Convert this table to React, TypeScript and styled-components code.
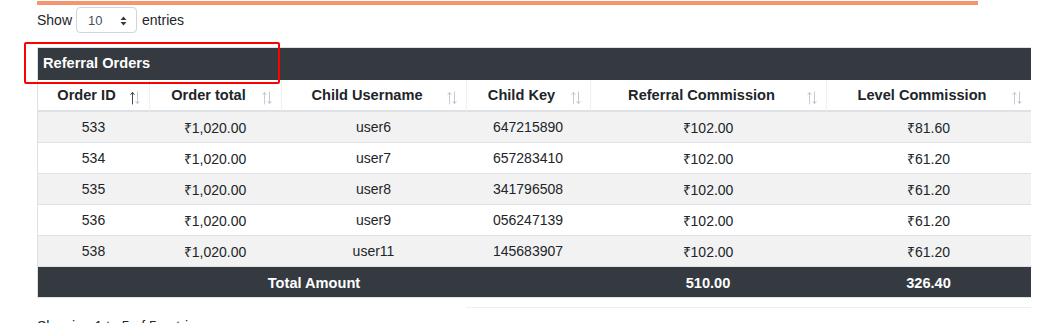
import React from "react";
import styled, { createGlobalStyle } from "styled-components";

const GlobalStyle = createGlobalStyle`
  html, body { margin: 0; padding: 0; background: #fff; }
  body {
    font-family: "Liberation Sans", Arial, sans-serif;
    font-size: 14px;
    color: #212529;
  }
`;

const Page = styled.div`
  position: relative;
  padding: 1px 0 0 37px;
`;

const TopBar = styled.div`
  width: 941px;
  height: 4px;
  background: #f4956f;
`;

const ShowRow = styled.div`
  display: flex;
  align-items: center;
  margin-top: 2px;
  height: 26px;
  font-size: 14px;
  line-height: 16px;
`;

const SelectBox = styled.div`
  box-sizing: border-box;
  width: 61px;
  height: 26px;
  margin: 0 5px 0 4px;
  border: 1px solid #ced4da;
  border-radius: 4px;
  display: flex;
  align-items: center;
  justify-content: space-between;
  padding: 2px 9px 0 11px;
  font-size: 13px;
  color: #495057;
`;

const TableWrap = styled.div`
  margin-top: 14px;
  width: 994px;
  box-sizing: border-box;
  border-left: 1px solid #dee2e6;
  border-top: 1px solid #dee2e6;
  overflow: hidden;
`;

const Table = styled.table`
  width: 993px;
  table-layout: fixed;
  border-collapse: separate;
  border-spacing: 0;
  font-size: 14px;
`;

const CaptionCell = styled.th`
  background: #343a40;
  color: #fff;
  font-weight: bold;
  font-size: 14.6px;
  text-align: left;
  height: 32px;
  padding: 0 0 2px 5px;
  box-sizing: border-box;
`;

const HeadCell = styled.th`
  background: #fff;
  height: 32px;
  box-sizing: border-box;
  padding: 0 9px 0 17px;
  border-bottom: 2px solid #dee2e6;
  border-left: 1px solid #f1f1f1;
  &:first-child { border-left: none; }
  font-weight: bold;
  font-size: 14.6px;
  color: #212529;
`;

const HeadInner = styled.div`
  display: flex;
  align-items: center;
  gap: 12px;
`;

const HeadLabel = styled.span`
  flex: 1;
  text-align: center;
  white-space: nowrap;
`;

const SortIcon = styled.svg`
  flex: none;
  width: 10px;
  height: 14px;
  margin-top: 5px;
`;

const Row = styled.tr<{ $striped: boolean }>`
  background: ${(p) => (p.$striped ? "#f2f2f2" : "#fff")};
`;

const Cell = styled.td`
  height: 31px;
  box-sizing: border-box;
  padding: 0 4px;
  text-align: center;
  border-bottom: 1px solid #dee2e6;
  color: #212529;
`;

const FootCell = styled.td`
  background: #343a40;
  color: #fff;
  font-weight: bold;
  font-size: 14.6px;
  text-align: center;
  height: 31px;
  box-sizing: border-box;
  border-bottom: 1px solid #dee2e6;
  padding: 1px 4px 0;
`;

const BottomLine = styled.div`
  margin: 9px 0 0 429px;
  width: 565px;
  border-top: 1px solid #efefef;
`;

const Info = styled.div`
  margin-top: 10px;
  font-size: 14px;
`;

const Highlight = styled.div`
  position: absolute;
  left: 24px;
  top: 42px;
  width: 256px;
  height: 42px;
  box-sizing: border-box;
  border: 2px solid #ff0000;
  border-radius: 2px;
  pointer-events: none;
`;

const Sort = ({ active }: { active?: boolean }) => (
  <SortIcon viewBox="0 0 10 14">
    <g fill="none" strokeWidth="1" strokeLinecap="round">
      <g stroke={active ? "#444a50" : "#c8ccd2"}>
        <line x1="2.5" y1="1.5" x2="2.5" y2="13" />
        <polyline points="0.8,3.5 2.5,1.3 4.2,3.5" />
      </g>
      <g stroke="#cdc4cc">
        <line x1="7.5" y1="1" x2="7.5" y2="12.5" />
        <polyline points="5.8,10.5 7.5,12.7 9.2,10.5" />
      </g>
    </g>
  </SortIcon>
);

const columns = [
  { label: "Order ID", width: 111, active: true },
  { label: "Order total", width: 132 },
  { label: "Child Username", width: 185 },
  { label: "Child Key", width: 124 },
  { label: "Referral Commission", width: 236 },
  { label: "Level Commission", width: 205 },
];

const rows = [
  ["533", "₹1,020.00", "user6", "647215890", "₹102.00", "₹81.60"],
  ["534", "₹1,020.00", "user7", "657283410", "₹102.00", "₹61.20"],
  ["535", "₹1,020.00", "user8", "341796508", "₹102.00", "₹61.20"],
  ["536", "₹1,020.00", "user9", "056247139", "₹102.00", "₹61.20"],
  ["538", "₹1,020.00", "user11", "145683907", "₹102.00", "₹61.20"],
];

export default function App() {
  return (
    <>
      <GlobalStyle />
      <Page>
        <TopBar />
        <ShowRow>
          Show
          <SelectBox>
            <span>10</span>
            <svg width="7" height="10" viewBox="0 0 7 10">
              <polygon points="3.5,0.5 6.5,4 0.5,4" fill="#343a40" />
              <polygon points="0.5,6 6.5,6 3.5,9.5" fill="#343a40" />
            </svg>
          </SelectBox>
          entries
        </ShowRow>
        <TableWrap>
          <Table>
            <colgroup>
              {columns.map((c) => (
                <col key={c.label} style={{ width: c.width }} />
              ))}
            </colgroup>
            <thead>
              <tr>
                <CaptionCell colSpan={6}>Referral Orders</CaptionCell>
              </tr>
              <tr>
                {columns.map((c) => (
                  <HeadCell key={c.label}>
                    <HeadInner>
                      <HeadLabel>{c.label}</HeadLabel>
                      <Sort active={c.active} />
                    </HeadInner>
                  </HeadCell>
                ))}
              </tr>
            </thead>
            <tbody>
              {rows.map((r, i) => (
                <Row key={r[0]} $striped={i % 2 === 0}>
                  {r.map((v, j) => (
                    <Cell key={j}>{v}</Cell>
                  ))}
                </Row>
              ))}
            </tbody>
            <tfoot>
              <tr>
                <FootCell colSpan={4}>Total Amount</FootCell>
                <FootCell>510.00</FootCell>
                <FootCell>326.40</FootCell>
              </tr>
            </tfoot>
          </Table>
        </TableWrap>
        <BottomLine />
        <Info>Showing 1 to 5 of 5 entries</Info>
        <Highlight />
      </Page>
    </>
  );
}
